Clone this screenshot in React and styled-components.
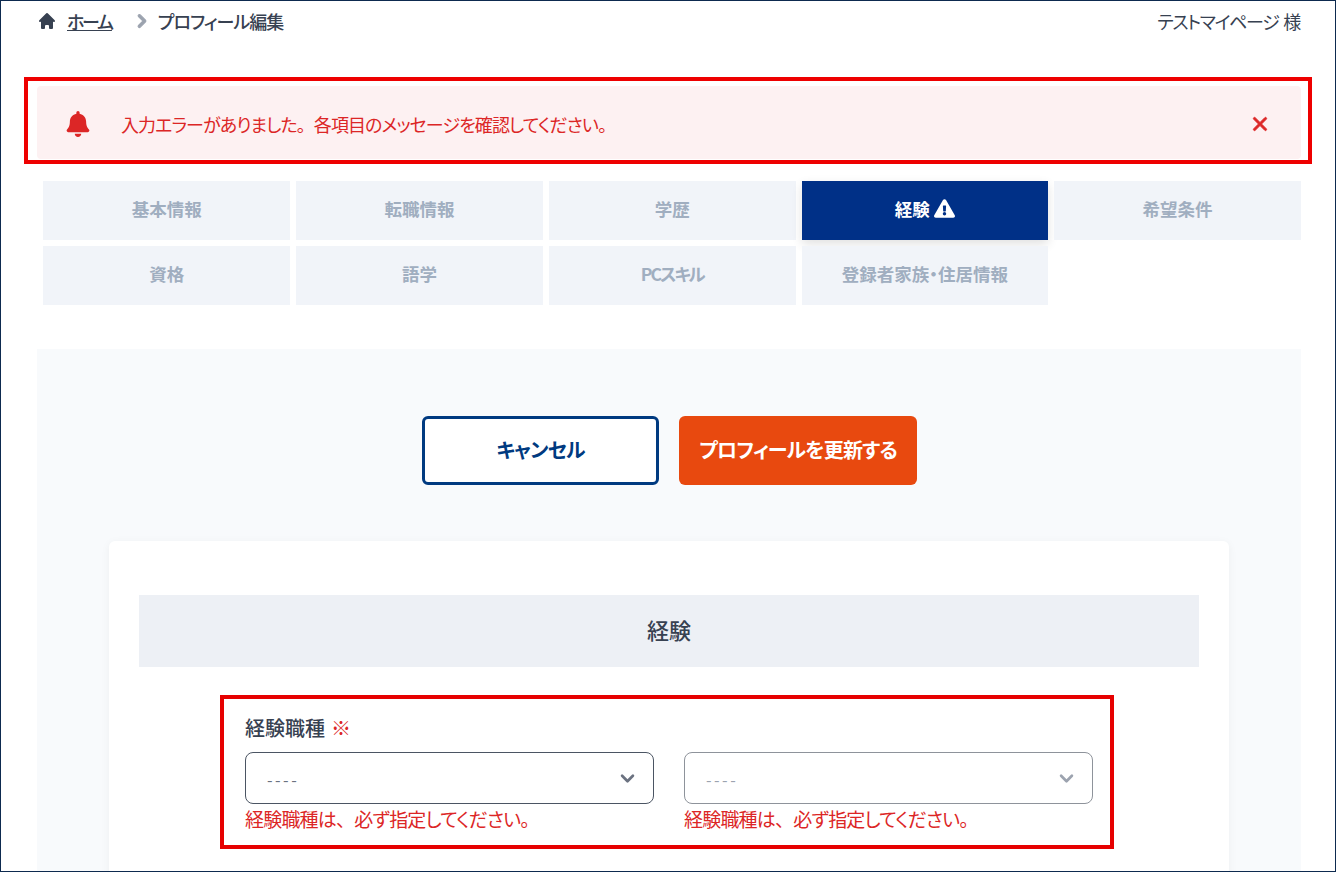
import React from 'react';
import styled, { createGlobalStyle } from 'styled-components';
import { HiHome, HiX, HiChevronRight, HiChevronDown } from 'react-icons/hi';
import { FaBell, FaExclamationTriangle } from 'react-icons/fa';

const GlobalStyle = createGlobalStyle`
  html, body {
    margin: 0;
    padding: 0;
    background: #fff;
  }
  * {
    box-sizing: border-box;
  }
`;

const Page = styled.div`
  width: 1336px;
  height: 872px;
  overflow: hidden;
  border: 1px solid #0d2a4f;
  background: #fff;
  color: #374151;
  font-family: 'Noto Sans CJK JP', 'Noto Sans', sans-serif;
  font-feature-settings: 'palt';
`;

const TopBar = styled.div`
  display: flex;
  align-items: center;
  justify-content: space-between;
  height: 40px;
  padding: 0 35px 0 36px;
`;

const Crumbs = styled.div`
  display: flex;
  align-items: center;
  font-size: 18px;
  font-weight: 500;
  letter-spacing: -1px;
`;

const HomeLink = styled.a`
  margin: 0 17px 0 10px;
  color: #374151;
  letter-spacing: -2.2px;
  text-decoration: underline;
`;

const CrumbArrow = styled(HiChevronRight)`
  width: 26px;
  height: 26px;
  margin-right: 3px;
  color: #9ca3af;
  stroke: currentColor;
  stroke-width: 0.8;
`;

const UserName = styled.div`
  font-size: 18px;
  letter-spacing: -1.3px;
  word-spacing: 2px;
`;

const AlertFrame = styled.div`
  width: 1288px;
  height: 87px;
  margin: 36px 0 0 23px;
  padding: 5px 7px 1px 9px;
  border: 4px solid #ee0000;
`;

const Alert = styled.div`
  display: flex;
  align-items: center;
  height: 100%;
  padding: 2px 30px 0 28px;
  border-radius: 4px;
  background: #fdf1f2;
  color: #dc2626;
  font-size: 18px;
  letter-spacing: -0.9px;
`;

const AlertText = styled.span`
  flex: 1;
  margin-left: 30px;
`;

const CloseIcon = styled(HiX)`
  width: 22px;
  height: 22px;
  stroke: currentColor;
  stroke-width: 0.8;
`;

const Punct = styled.span`
  font-feature-settings: normal;
`;

const Tabs = styled.div`
  display: grid;
  grid-template-columns: repeat(5, 1fr);
  gap: 6px;
  width: 1257.4px;
  margin: 17px 0 0 42.49px;
`;

const Tab = styled.div`
  display: flex;
  align-items: center;
  justify-content: center;
  gap: 4px;
  height: 59px;
  padding-bottom: 4px;
  background: ${p => (p.$active ? '#003087' : '#f1f4f9')};
  color: ${p => (p.$active ? '#fff' : '#a0aec0')};
  font-size: 17.5px;
  font-weight: 700;
  letter-spacing: ${p => (p.$tight ? '-2px' : '0')};
  box-shadow: ${p => (p.$active ? '0 4px 10px rgba(0, 0, 0, 0.12)' : 'none')};
`;

const Panel = styled.section`
  width: 1264px;
  margin: 44px 0 0 36px;
  padding: 67px 72px 0;
  background: #f8fafc;
`;

const Actions = styled.div`
  display: flex;
  justify-content: center;
  gap: 20px;
  padding-left: 1px;
`;

const Button = styled.button`
  width: ${p => (p.$primary ? '238px' : '237px')};
  height: 69px;
  padding: 0 0 2px;
  border: ${p => (p.$primary ? 'none' : '3px solid #003a80')};
  border-radius: 6px;
  background: ${p => (p.$primary ? '#e8490f' : '#fff')};
  color: ${p => (p.$primary ? '#fff' : '#003a80')};
  font-family: inherit;
  font-feature-settings: inherit;
  font-size: 20px;
  font-weight: 700;
  letter-spacing: -0.8px;
`;

const Card = styled.div`
  height: 400px;
  margin-top: 56px;
  padding: 54px 30px 0;
  border-radius: 6px;
  background: #fff;
  box-shadow: 0 2px 10px rgba(0, 0, 0, 0.05);
`;

const CardTitle = styled.h2`
  display: flex;
  align-items: center;
  justify-content: center;
  height: 72px;
  margin: 0;
  padding-bottom: 5px;
  background: #edf0f5;
  font-size: 22px;
  font-weight: 500;
`;

const FieldFrame = styled.div`
  width: 894px;
  height: 154px;
  margin: 28px 0 0 81px;
  padding: 14px 21px 0;
  border: 4px solid #e60000;
`;

const Label = styled.div`
  height: 39px;
  font-size: 20px;
  font-weight: 500;
  line-height: 30px;
`;

const Required = styled.span`
  margin-left: 6px;
  color: #dc2626;
`;

const FieldRow = styled.div`
  display: grid;
  grid-template-columns: 409px 409px;
  gap: 30px;
`;

const Select = styled.div`
  position: relative;
  height: 52px;
  padding: 14px 21px 0;
  border: 1px solid ${p => (p.$muted ? '#8e939b' : '#4b5563')};
  border-radius: 8px;
  color: ${p => (p.$muted ? '#9ca3af' : '#6b7280')};
  font-size: 16px;
  letter-spacing: 2.5px;
`;

const Chevron = styled(HiChevronDown)`
  position: absolute;
  top: 12px;
  right: 12px;
  width: 27px;
  height: 27px;
  color: ${p => (p.$muted ? '#9ca3af' : '#6b7280')};
`;

const ErrorText = styled.div`
  margin-top: 1px;
  color: #dc2626;
  font-size: 19px;
  letter-spacing: -0.8px;
  line-height: 28px;
`;

const tabs = [
  { label: '基本情報' },
  { label: '転職情報' },
  { label: '学歴' },
  { label: '経験', active: true },
  { label: '希望条件' },
  { label: '資格' },
  { label: '語学' },
  { label: 'PCスキル', tight: true },
  { label: '登録者家族・住居情報' }
];

const Field = ({ muted }) => (
  <div>
    <Select $muted={muted}>
      ----
      <Chevron $muted={muted} />
    </Select>
    <ErrorText>
      経験職種は<Punct>、</Punct>必ず指定してください。
    </ErrorText>
  </div>
);

const App = () => (
  <Page>
    <GlobalStyle />
    <TopBar>
      <Crumbs>
        <HiHome size={20} />
        <HomeLink>ホーム</HomeLink>
        <CrumbArrow />
        プロフィール編集
      </Crumbs>
      <UserName>テストマイページ 様</UserName>
    </TopBar>

    <AlertFrame>
      <Alert>
        <FaBell size={26} />
        <AlertText>
          入力エラーがありました<Punct>。</Punct>各項目のメッセージを確認してください。
        </AlertText>
        <CloseIcon />
      </Alert>
    </AlertFrame>

    <Tabs>
      {tabs.map(tab => (
        <Tab key={tab.label} $active={tab.active} $tight={tab.tight}>
          {tab.label}
          {tab.active && <FaExclamationTriangle size={21} />}
        </Tab>
      ))}
    </Tabs>

    <Panel>
      <Actions>
        <Button>キャンセル</Button>
        <Button $primary>プロフィールを更新する</Button>
      </Actions>
      <Card>
        <CardTitle>経験</CardTitle>
        <FieldFrame>
          <Label>
            経験職種<Required>※</Required>
          </Label>
          <FieldRow>
            <Field />
            <Field muted />
          </FieldRow>
        </FieldFrame>
      </Card>
    </Panel>
  </Page>
);

export default App;
